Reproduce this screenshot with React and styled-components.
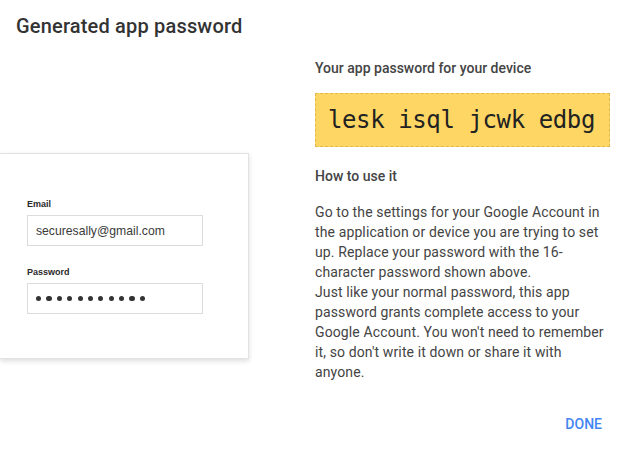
import React from 'react';
import styled, { createGlobalStyle } from 'styled-components';

const GlobalStyle = createGlobalStyle`
  html, body {
    margin: 0;
    padding: 0;
    background: #ffffff;
  }
  body {
    font-family: Roboto, 'Liberation Sans', sans-serif;
    color: #444;
  }
`;

const PASSWORD_LENGTH = 11;

const App = () => {
  return (
    <>
      <GlobalStyle />
      <Dialog>
        <Title>Generated app password</Title>
        <Body>
          <Illustration>
            <Card>
              <FieldLabel>Email</FieldLabel>
              <FakeInput>securesally@gmail.com</FakeInput>
              <FieldLabel spaced>Password</FieldLabel>
              <FakeInput>
                <Dots>
                  {Array.from({ length: PASSWORD_LENGTH }).map((_, i) => (
                    <Dot key={i} />
                  ))}
                </Dots>
              </FakeInput>
            </Card>
          </Illustration>

          <Details>
            <SectionHeading>Your app password for your device</SectionHeading>
            <PasswordBox>lesk isql jcwk edbg</PasswordBox>
            <SectionHeading top={19}>How to use it</SectionHeading>
            <Instructions>
              Go to the settings for your Google Account in the application or device you are trying to set up. Replace your password with the 16-character password shown above.
              <br />
              Just like your normal password, this app password grants complete access to your Google Account. You won't need to remember it, so don't write it down or share it with anyone.
            </Instructions>
          </Details>
        </Body>
        <Footer>
          <DoneButton>DONE</DoneButton>
        </Footer>
      </Dialog>
    </>
  );
};

export default App;

const Dialog = styled.div`
  width: 635px;
  height: 451px;
  overflow: hidden;
  display: flex;
  flex-direction: column;
`;

const Title = styled.h1`
  margin: 0;
  padding: 14px 16px 0;
  font-size: 20px;
  line-height: 24px;
  font-weight: 500;
  letter-spacing: 0.18px;
  color: #333;
`;

const Body = styled.div`
  display: flex;
  align-items: flex-start;
`;

const Illustration = styled.div`
  width: 249px;
  margin-right: 66px;
  padding-top: 115px;
`;

const Card = styled.div`
  background: #fff;
  border: 1px solid #e2e2e2;
  border-left: none;
  box-shadow: 0 2px 5px rgba(0, 0, 0, 0.14);
  padding: 44px 0 44px 27px;
  font-family: 'Liberation Sans', Arial, sans-serif;
`;

const FieldLabel = styled.div`
  font-size: 9px;
  line-height: 12px;
  font-weight: bold;
  color: #2a2a2a;
  margin-top: ${(props) => (props.spaced ? '20px' : '0')};
  margin-bottom: 5px;
`;

const FakeInput = styled.div`
  box-sizing: border-box;
  width: 176px;
  height: 31px;
  border: 1px solid #dcdcdc;
  padding: 0 8px;
  display: flex;
  align-items: center;
  font-size: 12.2px;
  color: #3a3a3a;
`;

const Dots = styled.div`
  display: flex;
  gap: 5.2px;
`;

const Dot = styled.span`
  width: 5.2px;
  height: 5.2px;
  border-radius: 50%;
  background: #333;
`;

const Details = styled.div`
  width: 295px;
  padding-top: 20px;
`;

const SectionHeading = styled.h2`
  margin: ${(props) => props.top || 0}px 0 0;
  font-size: 14px;
  line-height: 20px;
  font-weight: 500;
  color: #444;
`;

const PasswordBox = styled.div`
  margin-top: 15px;
  background: #fdd663;
  border: 1px dashed #e0b850;
  padding: 12px 12px;
  font-family: 'DejaVu Sans Mono', 'Liberation Mono', monospace;
  font-size: 24px;
  line-height: 28px;
  letter-spacing: -0.4px;
  color: #222;
  white-space: nowrap;
`;

const Instructions = styled.p`
  margin: 16px 0 0;
  font-size: 14px;
  line-height: 20px;
  letter-spacing: 0.12px;
  color: #444;
`;

const Footer = styled.div`
  display: flex;
  justify-content: flex-end;
  padding: 32px 33px 0 0;
`;

const DoneButton = styled.button`
  background: none;
  border: none;
  padding: 0;
  font-family: Roboto, 'Liberation Sans', sans-serif;
  font-size: 14px;
  line-height: 20px;
  font-weight: 500;
  color: #4285f4;
  cursor: pointer;
`;
